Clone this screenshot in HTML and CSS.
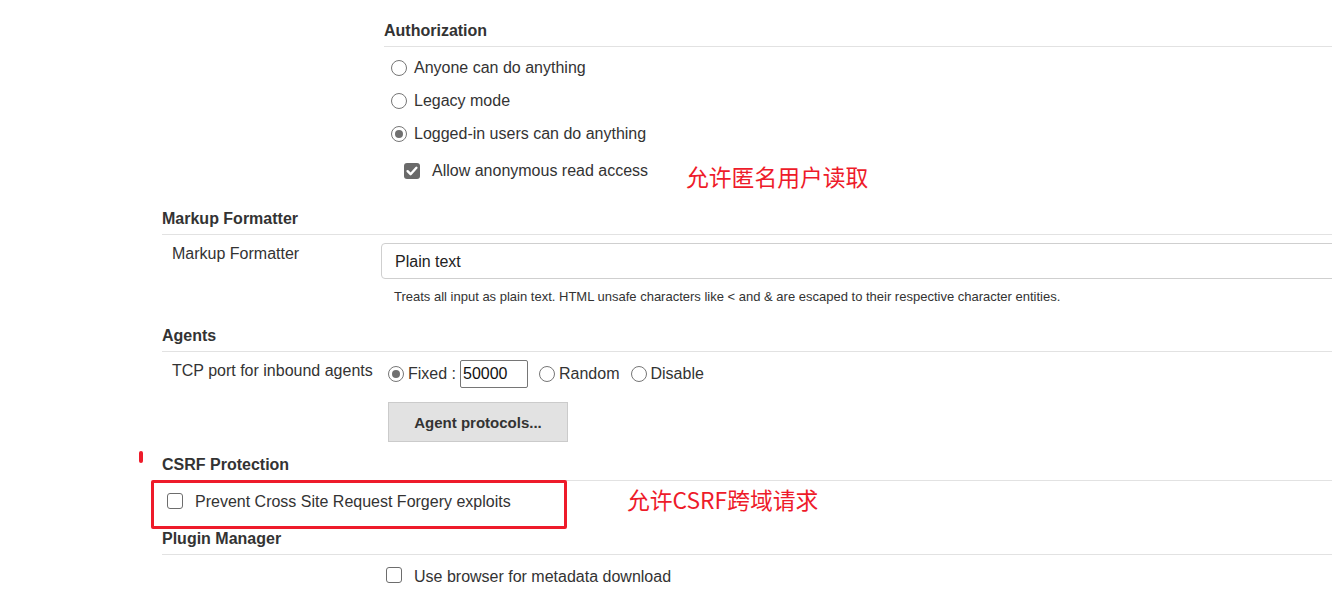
FILE: index.html
```html
<!DOCTYPE html>
<html>
<head>
<meta charset="utf-8">
<link rel="stylesheet" href="styles.css">
</head>
<body>
<div class="page">
  <section class="auth">
    <div class="sec-title">Authorization</div>
    <div class="opt-list">
      <label class="opt"><span class="radio"></span><span>Anyone can do anything</span></label>
      <label class="opt"><span class="radio"></span><span>Legacy mode</span></label>
      <label class="opt"><span class="radio on"></span><span>Logged-in users can do anything</span></label>
      <label class="opt sub"><span class="check on"><svg viewBox="0 0 16 16" width="16" height="16"><path d="M3.6 8.2 L6.6 11.2 L12.4 4.8" fill="none" stroke="#fff" stroke-width="2.4" stroke-linecap="round" stroke-linejoin="round"/></svg></span><span>Allow anonymous read access</span><span class="note note-anon">允许匿名用户读取</span></label>
    </div>
  </section>

  <section class="sec sec-markup">
    <div class="sec-title">Markup Formatter</div>
    <div class="field">
      <div class="label">Markup Formatter</div>
      <div class="control">
        <div class="select">Plain text</div>
        <div class="help">Treats all input as plain text. HTML unsafe characters like &lt; and &amp; are escaped to their respective character entities.</div>
      </div>
    </div>
  </section>

  <section class="sec sec-agents">
    <div class="sec-title">Agents</div>
    <div class="field">
      <div class="label tcp-label">TCP port for inbound agents</div>
      <div class="control">
        <div class="port-row">
          <span class="radio on"></span><span class="port-text fixed">Fixed :</span><span class="port-input">50000</span>
          <span class="radio"></span><span class="port-text">Random</span>
          <span class="radio"></span><span class="port-text">Disable</span>
        </div>
        <button class="btn">Agent protocols...</button>
      </div>
    </div>
  </section>

  <section class="sec sec-csrf">
    <span class="marker"></span>
    <div class="sec-title">CSRF Protection</div>
    <div class="csrf-row">
      <span class="check"></span><span>Prevent Cross Site Request Forgery exploits</span>
      <span class="redbox"></span>
      <span class="note note-csrf">允许CSRF跨域请求</span>
    </div>
  </section>

  <section class="sec sec-plugin">
    <div class="sec-title">Plugin Manager</div>
    <div class="plugin-row">
      <span class="check"></span><span>Use browser for metadata download</span>
    </div>
  </section>
</div>
</body>
</html>
```

FILE: styles.css
```css
html, body {
  margin: 0;
  padding: 0;
  background: #fff;
}
body {
  font-family: "Liberation Sans", Arial, sans-serif;
  font-size: 16px;
  color: #333;
  overflow: hidden;
  height: 600px;
}
.page {
  padding-left: 162px;
  width: 1170px;
  overflow: hidden;
}
.sec-title {
  font-weight: bold;
  font-size: 16px;
  line-height: 20px;
  padding-bottom: 5px;
  border-bottom: 1px solid #e2e2e2;
  color: #333;
}

/* Authorization */
.auth {
  margin-left: 222px;
  padding-top: 21px;
}
.opt-list {
  padding-top: 4px;
}
.opt {
  display: flex;
  align-items: center;
  height: 33px;
  padding-left: 7px;
  gap: 7px;
  position: relative;
}
.opt.sub {
  height: 34px;
  margin-top: 4px;
  padding-left: 20px;
  gap: 12px;
}
.radio {
  width: 14px;
  height: 14px;
  border: 1px solid #767676;
  border-radius: 50%;
  background: #fff;
  display: inline-flex;
  align-items: center;
  justify-content: center;
  flex: none;
}
.radio.on::after {
  content: "";
  width: 8px;
  height: 8px;
  border-radius: 50%;
  background: #707070;
}
.check {
  width: 14px;
  height: 14px;
  border: 1px solid #6d6d6d;
  border-radius: 3px;
  background: #fff;
  display: inline-flex;
  align-items: center;
  justify-content: center;
  flex: none;
}
.check.on {
  background: #6a6a6a;
  border-color: #6a6a6a;
  width: 16px;
  height: 16px;
  border: none;
}
.note {
  position: absolute;
  font-family: "Noto Sans CJK SC", "Microsoft YaHei", sans-serif;
  font-size: 22.8px;
  color: #ee1b2a;
  white-space: nowrap;
  line-height: 30px;
}
.note-anon {
  left: 302px;
  top: 8px;
}

/* Generic section */
.sec {
  position: relative;
}
.sec-markup {
  margin-top: 21px;
}
.field {
  display: grid;
  grid-template-columns: 209px 1fr;
  padding-left: 10px;
}
.label {
  padding-top: 9px;
  line-height: 20px;
}
.control {
  padding-top: 8px;
}
.select {
  width: 1000px;
  height: 34px;
  border: 1px solid #cfcfcf;
  border-radius: 4px;
  box-sizing: content-box;
  padding-left: 13px;
  line-height: 36px;
  color: #222;
}
.help {
  font-size: 13px;
  line-height: 16px;
  margin-top: 10px;
  padding-left: 13px;
  color: #333;
}

/* Agents */
.sec-agents {
  margin-top: 21px;
}
.tcp-label {
  padding-top: 9px;
}
.port-row {
  display: flex;
  align-items: center;
  height: 28px;
  padding-left: 7px;
}
.port-row .radio {
  margin-right: 4px;
}
.port-text {
  margin-right: 11px;
}
.port-text.fixed {
  margin-right: 4px;
}
.port-input {
  width: 64px;
  height: 26px;
  border: 1px solid #767676;
  border-radius: 2px;
  line-height: 26px;
  padding-left: 2px;
  margin-right: 11px;
  color: #111;
}
.btn {
  display: block;
  margin: 14px 0 0 7px;
  width: 180px;
  height: 40px;
  background: #e2e2e2;
  border: 1px solid #cbcbcb;
  font-family: "Liberation Sans", Arial, sans-serif;
  font-size: 15px;
  font-weight: bold;
  color: #333;
}

/* CSRF */
.sec-csrf {
  margin-top: 13px;
}
.marker {
  position: absolute;
  left: -23px;
  top: -4px;
  width: 4px;
  height: 12px;
  border-radius: 2px;
  background: #ee1b2a;
}
.csrf-row {
  position: relative;
  display: flex;
  align-items: flex-start;
  height: 37px;
  padding-top: 11px;
  padding-left: 5px;
  gap: 12px;
  line-height: 20px;
}
.csrf-row .check {
  margin-top: 1px;
}
.redbox {
  position: absolute;
  left: -11px;
  top: -1px;
  width: 410px;
  height: 43px;
  border: 3px solid #ee1b2a;
  border-radius: 2px;
}
.note-csrf {
  left: 465px;
  top: 4px;
}

/* Plugin Manager */
.plugin-row {
  display: flex;
  align-items: center;
  height: 44px;
  padding-left: 224px;
  gap: 12px;
}
.plugin-row .check {
  position: relative;
  top: -2px;
}
```
